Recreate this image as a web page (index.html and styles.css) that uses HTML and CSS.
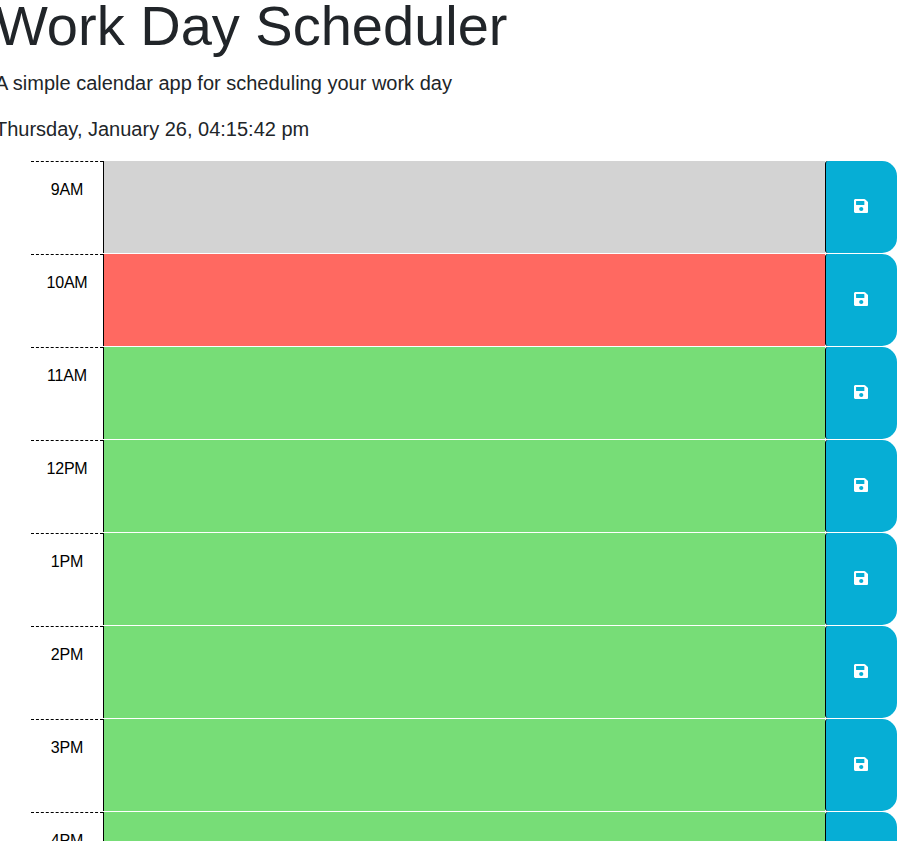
FILE: index.html
```html
<!DOCTYPE html>
<html lang="en">
<head>
<meta charset="utf-8">
<title>Work Day Scheduler</title>
<link rel="stylesheet" href="styles.css">
</head>
<body>
<svg class="sprite" aria-hidden="true"><symbol id="save" viewBox="0 0 448 512" preserveAspectRatio="none"><path d="M433.941 129.941l-83.882-83.882A48 48 0 0 0 316.118 32H48C21.49 32 0 53.49 0 80v352c0 26.51 21.49 48 48 48h352c26.51 0 48-21.49 48-48V163.882a48 48 0 0 0-14.059-33.941zM224 416c-35.346 0-64-28.654-64-64 0-35.346 28.654-64 64-64s64 28.654 64 64c0 35.346-28.654 64-64 64zm96-304.52V212c0 6.627-5.373 12-12 12H76c-6.627 0-12-5.373-12-12V108c0-6.627 5.373-12 12-12h228.52c3.183 0 6.235 1.264 8.485 3.515l3.48 3.48A11.996 11.996 0 0 1 320 111.480z"/></symbol></svg>
<header>
<h1>Work Day Scheduler</h1>
<p>A simple calendar app for scheduling your work day</p>
<p>Thursday, January 26, 04:15:42 pm</p>
</header>
<main>
<div class="row past"><div class="hour">9AM</div><div class="task"></div><button aria-label="save"><svg><use href="#save"/></svg></button></div>
<div class="row present"><div class="hour">10AM</div><div class="task"></div><button aria-label="save"><svg><use href="#save"/></svg></button></div>
<div class="row"><div class="hour">11AM</div><div class="task"></div><button aria-label="save"><svg><use href="#save"/></svg></button></div>
<div class="row"><div class="hour">12PM</div><div class="task"></div><button aria-label="save"><svg><use href="#save"/></svg></button></div>
<div class="row"><div class="hour">1PM</div><div class="task"></div><button aria-label="save"><svg><use href="#save"/></svg></button></div>
<div class="row"><div class="hour">2PM</div><div class="task"></div><button aria-label="save"><svg><use href="#save"/></svg></button></div>
<div class="row"><div class="hour">3PM</div><div class="task"></div><button aria-label="save"><svg><use href="#save"/></svg></button></div>
<div class="row"><div class="hour">4PM</div><div class="task"></div><button aria-label="save"><svg><use href="#save"/></svg></button></div>
</main>
</body>
</html>
```
FILE: styles.css
```css
* { box-sizing: border-box; }
html { overflow: hidden; }
body { display: flow-root; margin: 0; height: 841px; overflow: hidden; background: #fff; color: #212529; font: 16px/24px "Liberation Sans", Arial, sans-serif; }
.sprite { display: none; }
header { display: flow-root; height: 161px; margin-left: -5px; }
h1 { margin: -8px 0 9px; font-size: 56px; line-height: 67px; font-weight: 400; }
p { margin: 0 0 16px; font-size: 20px; line-height: 30px; }
main { width: 866px; margin-left: 31px; }
.row { display: flex; height: 92px; margin-bottom: 1px; }
.hour { width: 72px; padding: 16px 0 0; border-top: 1px dashed #000; color: #000; text-align: center; letter-spacing: -0.2px; }
.task { width: 722px; border-left: 1px solid #000; background: #77dd77; }
.past .task { background: #d3d3d3; }
.present .task { background: #ff6961; }
button { display: flex; align-items: center; justify-content: center; width: 72px; padding: 0 1px 2px 0; border: 0; border-left: 1px solid #000; border-radius: 3px 15px 15px 3px; background: #06aed5; color: #fff; }
button svg { width: 14.5px; height: 16px; fill: currentColor; }
```
